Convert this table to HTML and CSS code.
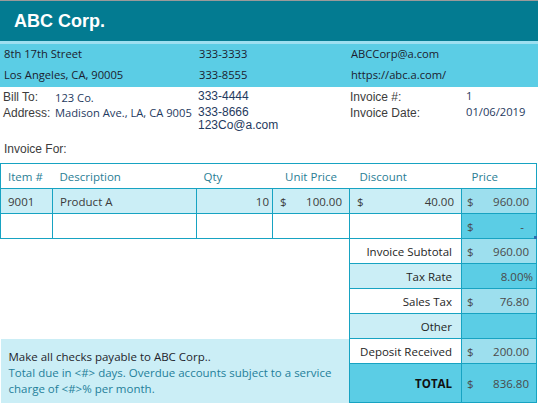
FILE: index.html
```html
<!DOCTYPE html>
<html>
<head>
<meta charset="utf-8">
<link rel="stylesheet" href="styles.css">
</head>
<body>
<div class="page">
  <header class="brand"><h1>ABC Corp.</h1></header>
  <div class="stripe"></div>
  <section class="info">
    <span>8th 17th Street</span><span>333-3333</span><span>ABCCorp@a.com</span>
    <span>Los Angeles, CA, 90005</span><span>333-8555</span><span>https://abc.a.com/</span>
  </section>
  <section class="billing">
    <span class="lbl r1 m1">Bill To:</span><span class="small r1 m2">123 Co.</span>
    <span class="phone r1 m0">333-4444</span>
    <span class="lbl r1 m1">Invoice #:</span><span class="small r1 m0">1</span>
    <span class="lbl r2 m1">Address:</span><span class="small r2 m1">Madison Ave., LA, CA 9005</span>
    <span class="phone r2 m0">333-8666</span>
    <span class="lbl r2 m1">Invoice Date:</span><span class="small r2 m0">01/06/2019</span>
    <span class="phone r3 up">123Co@a.com</span>
  </section>
  <p class="for">Invoice For:</p>
  <table class="items">
    <colgroup>
      <col class="c-item"><col class="c-desc"><col class="c-qty"><col class="c-unit"><col class="c-disc"><col class="c-price">
    </colgroup>
    <thead>
      <tr class="head">
        <th class="left">Item #</th>
        <th class="left">Description</th>
        <th class="left">Qty</th>
        <th>Unit Price</th>
        <th class="left wide">Discount</th>
        <th class="left wide">Price</th>
      </tr>
    </thead>
    <tbody>
      <tr class="line filled">
        <td>9001</td>
        <td>Product A</td>
        <td class="num">10</td>
        <td><div class="money"><span>$</span><span>100.00</span></div></td>
        <td><div class="money"><span>$</span><span>40.00</span></div></td>
        <td class="price mid"><div class="money"><span>$</span><span>960.00</span></div></td>
      </tr>
      <tr class="line">
        <td></td><td></td><td></td><td></td><td></td>
        <td class="price cyan"><div class="money"><span>$</span><span class="dash">-</span></div><i class="handle"></i></td>
      </tr>
      <tr class="sum">
        <td colspan="4" class="blank"></td>
        <td class="label">Invoice Subtotal</td>
        <td class="price mid"><div class="money"><span>$</span><span>960.00</span></div></td>
      </tr>
      <tr class="sum">
        <td colspan="4" class="blank"></td>
        <td class="label light">Tax Rate</td>
        <td class="price cyan"><div class="money end"><span>8.00%</span></div></td>
      </tr>
      <tr class="sum">
        <td colspan="4" class="blank"></td>
        <td class="label">Sales Tax</td>
        <td class="price mid"><div class="money"><span>$</span><span>76.80</span></div></td>
      </tr>
      <tr class="sum">
        <td colspan="4" class="blank"></td>
        <td class="label light">Other</td>
        <td class="price cyan"></td>
      </tr>
      <tr class="sum">
        <td colspan="4" rowspan="2" class="note">
          <p class="note-main">Make all checks payable to ABC Corp..</p>
          <p class="note-sub">Total due in &lt;#&gt; days. Overdue accounts subject to a service charge of &lt;#&gt;% per month.</p>
        </td>
        <td class="label">Deposit Received</td>
        <td class="price mid"><div class="money"><span>$</span><span>200.00</span></div></td>
      </tr>
      <tr class="total">
        <td class="label cyanbg"><b>TOTAL</b></td>
        <td class="price cyan"><div class="money"><span>$</span><span>836.80</span></div></td>
      </tr>
    </tbody>
  </table>
</div>
</body>
</html>
```

FILE: styles.css
```css
* { box-sizing: border-box; }
html, body { margin: 0; padding: 0; background: #fff; }
body {
  width: 538px;
  height: 406px;
  overflow: hidden;
  font-family: "Open Sans", "Liberation Sans", sans-serif;
  font-size: 11px;
  color: #333;
}
.page { border-top: 1px solid #9a9a9a; }

.brand {
  background: #037b91;
  height: 40px;
  display: flex;
  align-items: center;
  padding-left: 14px;
}
.brand h1 {
  margin: 0;
  font-family: "Liberation Sans", Arial, sans-serif;
  font-weight: bold;
  font-size: 18px;
  color: #fff;
}
.stripe { height: 3px; background: #9ddff0; }

.info {
  background: #5bcde5;
  height: 43px;
  display: grid;
  grid-template-columns: 195px 152px 1fr;
  grid-template-rows: 18px 25px;
  align-items: center;
  padding-left: 4px;
  font-size: 11.2px;
  color: #1c1c2e;
}

.billing {
  display: grid;
  grid-template-columns: 52px 143px 152px 116px 1fr;
  grid-template-rows: 16px 16px 16px;
  align-items: start;
  padding: 2px 0 0 3px;
  height: 51px;
  line-height: 14px;
}
.billing .lbl {
  font-family: "Liberation Sans", Arial, sans-serif;
  font-size: 12px;
  color: #3c3c3c;
}
.billing .small { font-size: 11.2px; color: #1f3a60; }
.billing .phone {
  grid-column: 3;
  font-family: "Liberation Sans", Arial, sans-serif;
  font-size: 12px;
  color: #1f3a60;
}
.billing .r1 { grid-row: 1; }
.billing .r2 { grid-row: 2; }
.billing .r3 { grid-row: 3; }
.billing .m0 { margin-top: 0; }
.billing .m1 { margin-top: 1px; }
.billing .m2 { margin-top: 2px; }
.billing .up { margin-top: -3px; }

.for {
  margin: 0;
  padding: 4px 0 0 4px;
  height: 25px;
  font-family: "Liberation Sans", Arial, sans-serif;
  font-size: 12px;
  color: #3c3c3c;
}

.items {
  border-collapse: collapse;
  table-layout: fixed;
  width: 536px;
  font-size: 11.5px;
}
.c-item { width: 52px; }
.c-desc { width: 144px; }
.c-qty { width: 76px; }
.c-unit { width: 77px; }
.c-disc { width: 112px; }
.c-price { width: 75px; }

.items td, .items th {
  padding: 0 7px;
  height: 25px;
  font-weight: normal;
  white-space: nowrap;
}
.head th {
  border-top: 1px solid #17a3c2;
  border-bottom: 1px solid #17a3c2;
  color: #2a7e95;
  text-align: center;
}
.head th.left { text-align: left; }
.head th.wide { padding-left: 10px; }
.head th:first-child { border-left: 1px solid #17a3c2; }
.head th:last-child { border-right: 1px solid #17a3c2; }

.line td { border: 1px solid #17a3c2; color: #3a3a3a; }
.line.filled td { background: #cbeef6; }
.line td.num { text-align: right; padding-right: 3px; }

.money { display: flex; justify-content: space-between; }
.money.end { justify-content: flex-end; }
.items td.price { padding: 0 7px 0 5px; color: #4a4a4a; position: relative; }
.price.cyan .money.end { margin-right: -4px; }
.items td.mid, .line.filled td.mid { background: #9ddfee; }
.items td.cyan { background: #5bcde5; }
.dash { padding-right: 5px; }
.handle {
  position: absolute;
  right: -1px;
  bottom: -1px;
  width: 3px;
  height: 3px;
  background: #2a6fb0;
}

.sum td, .total td { border: 1px solid #17a3c2; }
.sum td.blank { border: none; }
.items td.label { text-align: right; color: #1e1e1e; padding-right: 9px; }
.label.light { background: #cbeef6; }
.label.cyanbg { background: #5bcde5; }
.total td { height: 39px; }
.total b { font-weight: bold; color: #111; }

.items td.note {
  border: none;
  border-right: 1px solid #17a3c2;
  background: #cbeef6;
  vertical-align: top;
  padding: 10px 8px 0 8px;
  white-space: normal;
}
.note p { margin: 0; line-height: 16px; }
.note-main { color: #1e1e2c; }
.note-sub { color: #1f7f9a; }
```
